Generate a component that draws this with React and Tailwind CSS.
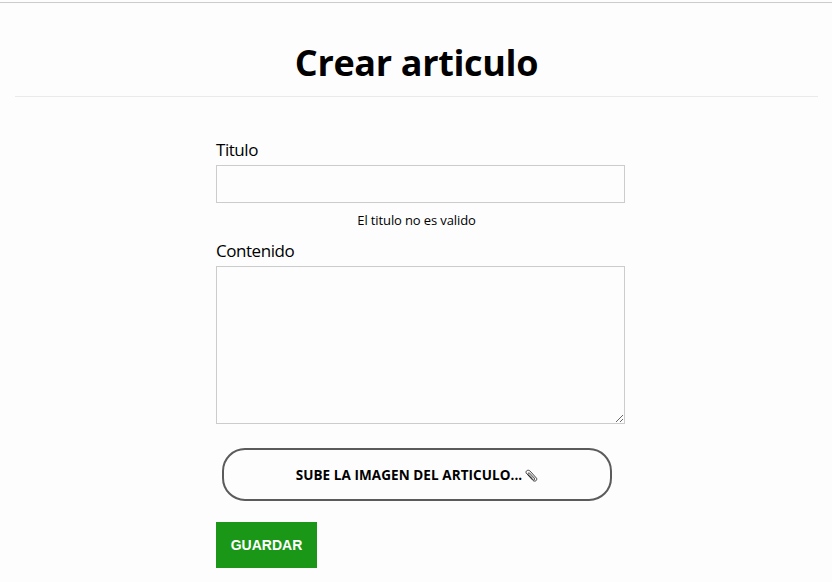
function PaperclipIcon() {
  return (
    <svg width="13" height="14" viewBox="0 0 13 14" fill="none" stroke="#222" strokeWidth="0.85" strokeLinecap="round">
      <path d="M3.1 6.2 7.8 11.3C9.2 12.8 12.4 12.2 11.6 9.3L5.1 2.1C3.4.3.2 1.6 1.2 4.2L7.6 10.5C8.9 11.7 10.3 10.4 9.4 9.2L4.6 4.1C3.8 3.3 2.7 4.1 3.4 5L7.6 9.3" />
    </svg>
  );
}

export default function App() {
  return (
    <main className="h-[582px] overflow-hidden bg-[#fdfdfd] pt-[2px] font-['Open_Sans','Noto_Sans',sans-serif] text-black">
      <div className="h-px bg-[#cccccc]" />
      <header className="ml-[15px] mr-[14px] flex h-[94px] flex-col items-center border-b border-[#eaeaea] pt-[35px]">
        <h1 className="whitespace-nowrap text-[36px] font-bold leading-[50px] tracking-[-0.35px]">Crear articulo</h1>
      </header>
      <form className="ml-[216px] flex w-[409px] flex-col pt-[41px]" onSubmit={(e) => e.preventDefault()}>
        <label htmlFor="titulo" className="h-[27px] text-[17px] leading-[24px] tracking-[-0.45px]">Titulo</label>
        <input id="titulo" className="h-[38px] w-full border border-[#cccccc] bg-[#fdfdfd] px-2 outline-none" />
        <small className="mr-[8px] mt-[7px] block h-[20px] text-center text-[13px] leading-[20px] tracking-[-0.12px]">El titulo no es valido</small>
        <label htmlFor="contenido" className="mt-[9px] h-[27px] text-[17px] leading-[24px] tracking-[-0.45px]">Contenido</label>
        <textarea id="contenido" className="block h-[158px] w-full resize border border-[#cccccc] bg-[#fdfdfd] px-2 outline-none" />
        <button type="button" className="ml-[6px] mt-[24px] flex h-[53px] w-[390px] items-center justify-center gap-[3px] rounded-[23px] border-2 border-[#5b5b5b] pt-[2px] text-[13.5px] font-bold">
          <span className="whitespace-nowrap tracking-[0.07px]">SUBE LA IMAGEN DEL ARTICULO...</span>
          <PaperclipIcon />
        </button>
        <button type="submit" className="mt-[21px] h-[46px] w-[101px] bg-[#1a9716] font-['Liberation_Sans',Arial,sans-serif] text-[14px] font-bold text-white">GUARDAR</button>
      </form>
    </main>
  );
}
